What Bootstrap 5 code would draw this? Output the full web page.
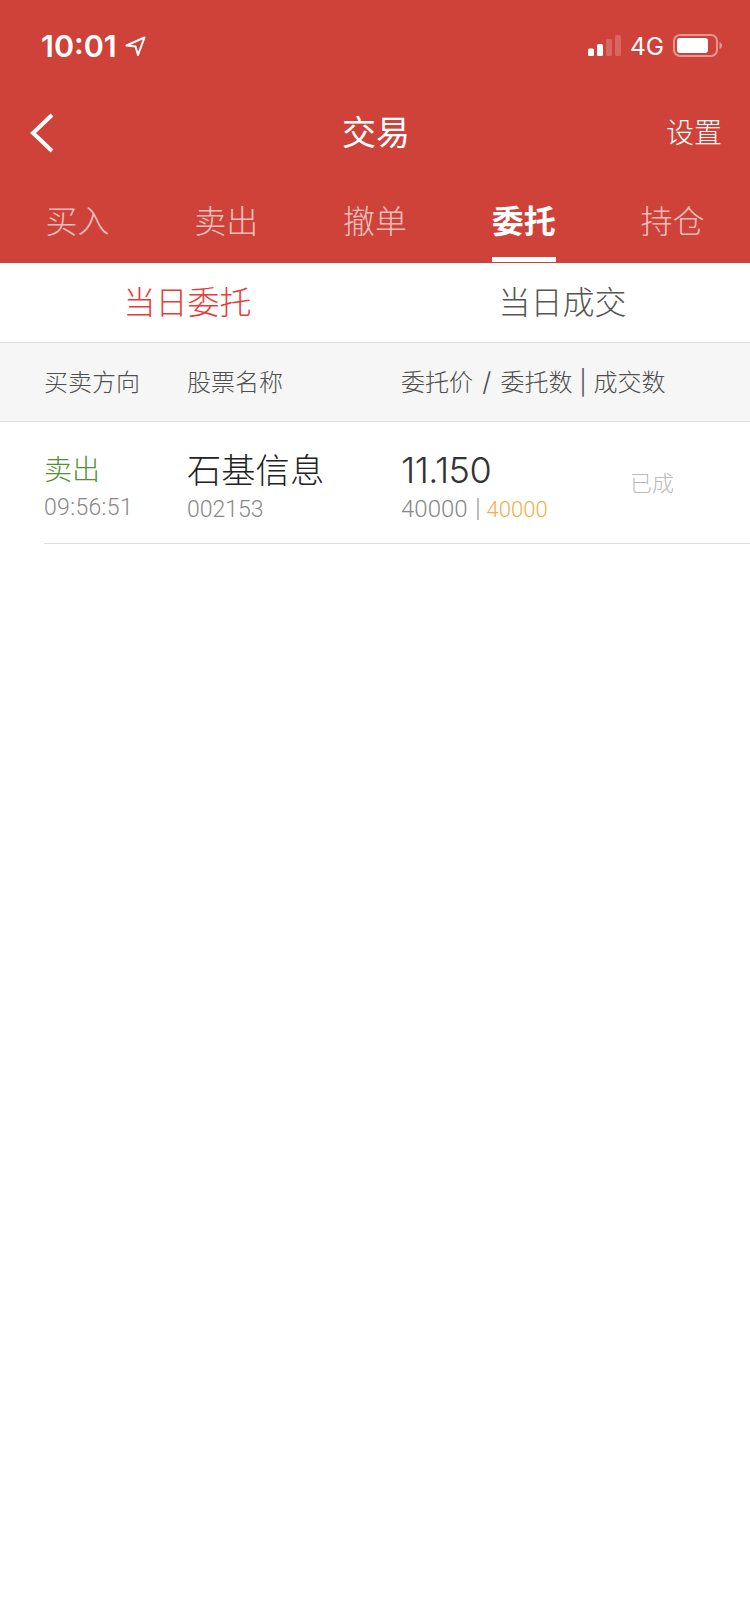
<!DOCTYPE html>
<html lang="zh">
<head>
    <meta charset="UTF-8">
    <meta name="viewport" content="width=device-width, initial-scale=1.0">
    <title>交易</title>
    <link href="https://cdn.jsdelivr.net/npm/bootstrap@5.3.0/dist/css/bootstrap.min.css" rel="stylesheet">
    <style>
        body {
            background: #fff;
            font-family: Inter, "Noto Sans CJK SC", sans-serif;
            font-weight: 300;
            color: #333;
        }
        .top-red { background: #cf4239; height: 263px; color: #fff; }
        .status-row { height: 88px; padding: 4px 28px 0 41px; }
        .clock { font-size: 30.5px; font-weight: 600; line-height: 1; }
        .status-right { margin-bottom: 2px; }
        .net-label { font-size: 24.5px; font-weight: 400; line-height: 1; margin: 2px 9px 0 9px; }
        .title-row { height: 88px; padding: 2px 28px 0 30px; }
        .title-main { font-size: 34px; font-weight: 400; line-height: 1; }
        .title-side { font-size: 28px; line-height: 1; width: 56px; }
        .back-box { width: 56px; }
        .tab-row { height: 87px; padding: 0 3px; }
        .tab-item {
            flex: 1 1 0;
            text-align: center;
            font-size: 32px;
            line-height: 1;
            padding-top: 30px;
            color: rgba(255, 255, 255, .68);
            position: relative;
        }
        .tab-on { color: #fff; font-weight: 700; }
        .tab-on::after {
            content: "";
            position: absolute;
            left: 43px;
            right: 42px;
            bottom: 1px;
            height: 5px;
            background: #fff;
        }
        .sub-tabs { height: 80px; border-bottom: 1px solid #ddd; }
        .sub-item { width: 50%; text-align: center; font-size: 32px; line-height: 1; color: #555; }
        .sub-on { color: #e63d3a; }
        .head-row {
            height: 79px;
            padding: 2px 0 0 44px;
            background: #f6f6f6;
            border-bottom: 1px solid #ddd;
            font-size: 24px;
            line-height: 1;
            color: #4f4f4f;
        }
        .slash-mark { margin: 0 2.5px; font-size: 26px; line-height: 0; }
        .col-dir { width: 143px; flex: none; }
        .col-name { width: 214px; flex: none; }
        .col-price { width: 229px; flex: none; }
        .order-row { margin-left: 44px; height: 122px; border-bottom: 1px solid #ddd; }
        .dir-text { font-size: 28px; line-height: 1; color: #568f35; margin-top: 34px; }
        .stock-name { font-size: 34.3px; line-height: 1; color: #222; margin-top: 32px; }
        .price-text { font-size: 36px; line-height: 1; color: #333; margin-top: 30px; letter-spacing: -.5px; }
        .sub-line {
            font-family: Roboto, sans-serif;
            font-size: 23px;
            line-height: 1;
            color: #888;
            margin-top: 12px;
        }
        .time-line { letter-spacing: .35px; }
        .code-line { margin-top: 10px; }
        .qty-line { margin-top: 9px; font-size: 24px; }
        .bar-sep {
            display: inline-block;
            width: 2px;
            height: 22px;
            margin: 0 8px 0 9px;
            background: #bbb;
            vertical-align: -3px;
        }
        .filled-num { color: #f0ae4c; font-size: 22px; }
        .state-text { font-size: 22px; line-height: 1; color: #bbb; margin-top: 50px; }
    </style>
</head>
<body>
    <div class="top-red">
        <!-- status bar -->
        <div class="status-row d-flex align-items-center justify-content-between">
            <div class="d-flex align-items-center gap-1">
                <span class="clock">10:01</span>
                <svg class="ms-1" width="21" height="21" viewBox="0 0 21 21"><path d="M1.500 9.500 19.500 1.500 13 19 10.500 10.500Z" fill="none" stroke="#fff" stroke-width="2" stroke-linejoin="round"/></svg>
            </div>
            <div class="status-right d-flex align-items-center">
                <svg width="33" height="21" viewBox="0 0 33 21">
                    <rect x="0" y="13.500" width="6" height="7.500" rx="1.500" fill="#fff"/>
                    <rect x="9" y="9" width="6" height="12" rx="1.500" fill="#fff"/>
                    <rect x="18" y="4" width="6" height="17" rx="1.500" fill="#fff" fill-opacity=".2"/>
                    <rect x="27" y="0" width="6" height="21" rx="1.500" fill="#fff" fill-opacity=".2"/>
                </svg>
                <span class="net-label">4G</span>
                <svg width="49" height="23" viewBox="0 0 49 23">
                    <rect x="1" y="1" width="43" height="21" rx="6" fill="none" stroke="#fff" stroke-opacity=".45" stroke-width="2"/>
                    <rect x="4" y="4" width="31" height="15" rx="3" fill="#fff"/>
                    <path d="M46.500 8v7c1.500-.5 2.500-2 2.500-3.500S48 8.500 46.500 8Z" fill="#fff" fill-opacity=".45"/>
                </svg>
            </div>
        </div>
        <!-- title -->
        <div class="title-row d-flex align-items-center justify-content-between">
            <div class="back-box d-flex">
                <svg width="24" height="40" viewBox="0 0 24 40"><path d="M22 2 3 20l19 18" fill="none" stroke="#fff" stroke-width="4"/></svg>
            </div>
            <div class="title-main">交易</div>
            <div class="title-side">设置</div>
        </div>
        <!-- tabs -->
        <div class="tab-row d-flex">
            <div class="tab-item">买入</div>
            <div class="tab-item">卖出</div>
            <div class="tab-item">撤单</div>
            <div class="tab-item tab-on">委托</div>
            <div class="tab-item">持仓</div>
        </div>
    </div>

    <div class="sub-tabs d-flex align-items-center">
        <div class="sub-item sub-on">当日委托</div>
        <div class="sub-item">当日成交</div>
    </div>

    <div class="head-row d-flex align-items-center">
        <div class="col-dir">买卖方向</div>
        <div class="col-name">股票名称</div>
        <div>委托价 <span class="slash-mark">/</span> 委托数 | 成交数</div>
    </div>

    <div class="order-row d-flex">
        <div class="col-dir">
            <div class="dir-text">卖出</div>
            <div class="sub-line time-line">09:56:51</div>
        </div>
        <div class="col-name">
            <div class="stock-name">石基信息</div>
            <div class="sub-line code-line">002153</div>
        </div>
        <div class="col-price">
            <div class="price-text">11.150</div>
            <div class="sub-line qty-line">40000<span class="bar-sep"></span><span class="filled-num">40000</span></div>
        </div>
        <div class="state-text">已成</div>
    </div>
    <script src="https://cdn.jsdelivr.net/npm/bootstrap@5.3.0/dist/js/bootstrap.bundle.min.js"></script>
</body>
</html>
